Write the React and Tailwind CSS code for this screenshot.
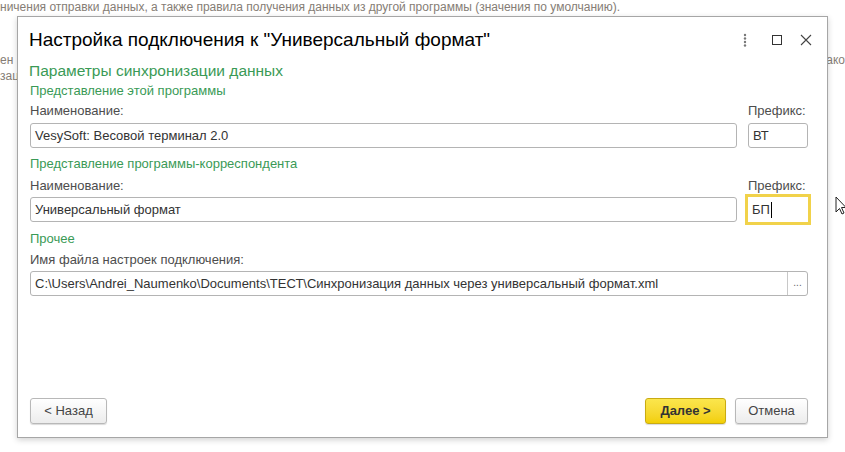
import React from "react";

const font = { fontFamily: '"Liberation Sans", Arial, sans-serif' };

function GroupTitle({ children, className = "" }) {
  return <div className={`text-[13px] leading-[16px] text-[#3a9a56] ${className}`}>{children}</div>;
}

function Label({ children, className = "" }) {
  return <div className={`text-[13px] leading-[16px] text-[#4d4d4d] ${className}`}>{children}</div>;
}

function Field({ value, className = "" }) {
  return (
    <div className={`h-[25px] border border-[#b4b4b4] rounded-[3px] bg-white flex items-center px-[4px] text-[13px] text-[#333] ${className}`}>
      {value}
    </div>
  );
}

function Button({ children, primary, className = "" }) {
  return (
    <button
      className={`h-[26px] rounded-[3px] border text-[13px] flex items-center justify-center shadow-[0_1px_1px_rgba(0,0,0,0.15)] ${
        primary
          ? "bg-gradient-to-b from-[#fbe64c] to-[#f2cf00] border-[#c9ab12] text-[#333] font-semibold"
          : "bg-gradient-to-b from-white to-[#ececec] border-[#b8b8b8] text-[#444]"
      } ${className}`}
      style={{ fontFamily: '"Liberation Sans Narrow", "Liberation Sans", Arial, sans-serif' }}
    >
      {children}
    </button>
  );
}

export default function App() {
  return (
    <div className="relative w-[845px] h-[452px] bg-white overflow-hidden" style={font}>
      {/* background page */}
      <div className="text-[12px] leading-[14px] text-[#857d75]">
        <div className="whitespace-nowrap">ничения отправки данных, а также правила получения данных из другой программы (значения по умолчанию).</div>
        <div className="mt-[39px] flex justify-between">
          <span>ен</span>
          <span>ако</span>
        </div>
        <div className="mt-[2px]">зац</div>
      </div>

      {/* dialog */}
      <div className="absolute left-[17px] top-[16px] w-[811px] h-[422px] bg-white border border-[#a6a6a6] shadow-[0_2px_6px_rgba(0,0,0,0.18)] flex flex-col pl-[12px] pr-[19px]">
        <div className="h-[45px] flex items-center justify-between shrink-0">
          <div className="text-[19px] text-black pt-[1px] -ml-[1px]">Настройка подключения к "Универсальный формат"</div>
          <div className="flex items-center -mr-[8px]">
            <svg width="20" height="20" viewBox="0 0 20 20" className="mr-[12px]">
              <circle cx="10" cy="5" r="1.2" fill="#777" />
              <circle cx="10" cy="8.5" r="1.2" fill="#777" />
              <circle cx="10" cy="12" r="1.2" fill="#777" />
              <circle cx="10" cy="15.5" r="1.2" fill="#777" />
            </svg>
            <svg width="20" height="20" viewBox="0 0 20 20" className="mr-[9px]">
              <rect x="5.5" y="5.5" width="9" height="9" fill="none" stroke="#333" strokeWidth="1" />
            </svg>
            <svg width="20" height="20" viewBox="0 0 20 20">
              <path d="M5 5 L15 15 M15 5 L5 15" stroke="#444" strokeWidth="1.1" />
            </svg>
          </div>
        </div>

        <div className="text-[15.5px] leading-[18px] text-[#3a9a56] -ml-[1px]">Параметры синхронизации данных</div>
        <GroupTitle className="mt-[3px]">Представление этой программы</GroupTitle>

        <div className="flex gap-[11px] mt-[4px]">
          <div className="flex-1">
            <Label>Наименование:</Label>
            <Field value="VesySoft: Весовой терминал 2.0" className="mt-[4px]" />
          </div>
          <div className="w-[60px]">
            <Label>Префикс:</Label>
            <Field value="ВТ" className="mt-[4px]" />
          </div>
        </div>

        <GroupTitle className="mt-[8px]">Представление программы-корреспондента</GroupTitle>

        <div className="flex gap-[11px] mt-[6px]">
          <div className="flex-1">
            <Label>Наименование:</Label>
            <Field value="Универсальный формат" className="mt-[3px]" />
          </div>
          <div className="w-[60px]">
            <Label>Префикс:</Label>
            <div className="-mx-[3px] h-[31px] border-[3px] border-[#f1d24a] bg-white flex items-center px-[4px] text-[13px] text-[#333]">
              БП<span className="inline-block w-[1px] h-[16px] bg-black ml-[1px]" />
            </div>
          </div>
        </div>

        <GroupTitle className="mt-[6px]">Прочее</GroupTitle>
        <Label className="mt-[5px]">Имя файла настроек подключения:</Label>
        <div className="mt-[3px] h-[25px] border border-[#b4b4b4] rounded-[3px] bg-white flex text-[13px] text-[#333]">
          <div className="flex-1 flex items-center px-[4px] whitespace-nowrap overflow-hidden">
            C:\Users\Andrei_Naumenko\Documents\ТЕСТ\Синхронизация данных через универсальный формат.xml
          </div>
          <div className="w-[20px] border-l border-[#c8c8c8] flex items-center justify-center text-[10px] text-[#666] pb-[3px]">...</div>
        </div>

        <div className="flex-1" />
        <div className="flex items-center pb-[13px]">
          <Button className="w-[77px]">&lt; Назад</Button>
          <div className="flex-1" />
          <Button primary className="w-[81px]">Далее &gt;</Button>
          <Button className="w-[73px] ml-[9px]">Отмена</Button>
        </div>
      </div>

      {/* mouse cursor */}
      <svg className="absolute left-[835px] top-[196px]" width="12" height="20" viewBox="0 0 12 20">
        <path d="M1 1 L1 16 L4.5 12.5 L7 18 L9 17 L6.5 11.5 L11 11.5 Z" fill="white" stroke="#222" strokeWidth="1" />
      </svg>
    </div>
  );
}
